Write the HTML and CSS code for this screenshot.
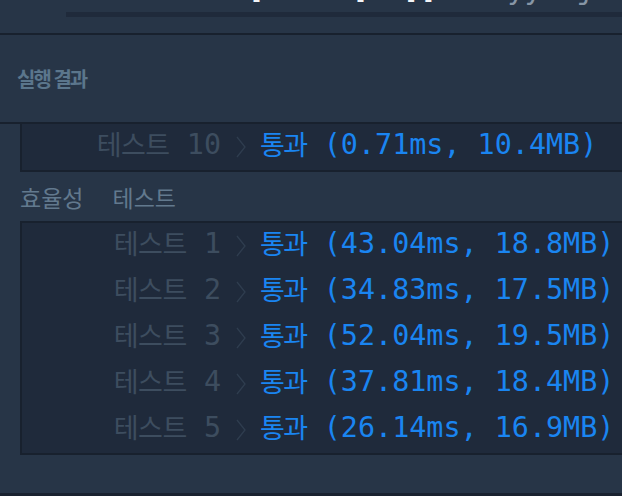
FILE: index.html
```html
<!DOCTYPE html>
<html lang="ko">
<head>
  <meta charset="UTF-8" />
  <meta name="viewport" content="width=device-width, initial-scale=1.0"/>
  <title>실행 결과</title>
  <link rel="stylesheet" href="styles.css">
</head>
<body>
  <div class="editor-tail">
    <div class="code-peek">
      <pre class="code-line"><span class="num">1</span> <span class="num">3</span><span class="br">[</span><span class="num">2</span><span class="num">4</span> <span class="num">5</span> <span class="br">[</span>  <span class="br">]]</span>    <span class="dim">yy</span>  <span class="dim">j</span></pre>
    </div>
    <div class="h-scroll"></div>
  </div>

  <section class="output">
    <h2 class="output-title">실행 결과</h2>

    <div class="results">
      <div class="case-box case-box-top">
        <div class="case-row">
          <span class="case-label"><span class="ko">테스트</span> 10</span>
          <svg class="chev" width="12" height="24" viewBox="0 0 12 24"><polyline points="2,2 10,12 2,22" fill="none" stroke="#2f3d4f" stroke-width="1.3"/></svg>
          <span class="case-status"><span class="ko">통과</span> (0.71ms, 10.4MB)</span>
        </div>
      </div>

      <div class="group-title">
        <span class="group-name">효율성</span>
        <span class="group-kind">테스트</span>
      </div>

      <div class="case-box">
        <div class="case-row">
          <span class="case-label"><span class="ko">테스트</span> 1</span>
          <svg class="chev" width="12" height="24" viewBox="0 0 12 24"><polyline points="2,2 10,12 2,22" fill="none" stroke="#2f3d4f" stroke-width="1.3"/></svg>
          <span class="case-status"><span class="ko">통과</span> (43.04ms, 18.8MB)</span>
        </div>
        <div class="case-row">
          <span class="case-label"><span class="ko">테스트</span> 2</span>
          <svg class="chev" width="12" height="24" viewBox="0 0 12 24"><polyline points="2,2 10,12 2,22" fill="none" stroke="#2f3d4f" stroke-width="1.3"/></svg>
          <span class="case-status"><span class="ko">통과</span> (34.83ms, 17.5MB)</span>
        </div>
        <div class="case-row">
          <span class="case-label"><span class="ko">테스트</span> 3</span>
          <svg class="chev" width="12" height="24" viewBox="0 0 12 24"><polyline points="2,2 10,12 2,22" fill="none" stroke="#2f3d4f" stroke-width="1.3"/></svg>
          <span class="case-status"><span class="ko">통과</span> (52.04ms, 19.5MB)</span>
        </div>
        <div class="case-row">
          <span class="case-label"><span class="ko">테스트</span> 4</span>
          <svg class="chev" width="12" height="24" viewBox="0 0 12 24"><polyline points="2,2 10,12 2,22" fill="none" stroke="#2f3d4f" stroke-width="1.3"/></svg>
          <span class="case-status"><span class="ko">통과</span> (37.81ms, 18.4MB)</span>
        </div>
        <div class="case-row">
          <span class="case-label"><span class="ko">테스트</span> 5</span>
          <svg class="chev" width="12" height="24" viewBox="0 0 12 24"><polyline points="2,2 10,12 2,22" fill="none" stroke="#2f3d4f" stroke-width="1.3"/></svg>
          <span class="case-status"><span class="ko">통과</span> (26.14ms, 16.9MB)</span>
        </div>
      </div>
    </div>
  </section>

  <div class="bottom-edge"></div>
</body>
</html>
```

FILE: styles.css
```css
body {
  margin: 0;
  width: 622px;
  height: 496px;
  overflow: hidden;
  background: #273547;
  font-family: "Noto Sans CJK KR", sans-serif;
}

/* tail of the code editor above the output panel */
.editor-tail {
  height: 33px;
  border-bottom: 2px solid #18212e;
}

.code-peek {
  height: 5px;
  overflow: hidden;
}

.code-line {
  margin: -23px 0 0 195px;
  font-family: "DejaVu Sans Mono", monospace;
  font-size: 28.8px;
  line-height: 24px;
  color: #e8edf2;
}

.code-line .num { color: #3f9a4f; }
.code-line .br { color: #f2f4f7; }
.code-line .dim { color: #8796a6; }

.h-scroll {
  height: 5px;
  margin: 7px 0 0 66px;
  background: #1f2a3b;
}

.output-title {
  height: 87px;
  margin: 0;
  padding-left: 17px;
  display: flex;
  align-items: center;
  font-size: 20px;
  font-weight: 700;
  letter-spacing: -2px;
  color: #5b768c;
}

.results {
  border-top: 2px solid #18212e;
}

.case-box {
  margin-left: 20px;
  background: #1f2a3b;
  border: 2px solid #18212e;
  border-right: none;
}

.case-box-top {
  border-top: none;
}

.case-row {
  display: grid;
  grid-template-columns: 199px 39px auto;
  align-items: center;
  box-sizing: border-box;
  height: 46px;
  padding-bottom: 6px;
  line-height: 34px;
  font-family: "DejaVu Sans Mono", "Noto Sans CJK KR", monospace;
  font-size: 28.4px;
  white-space: nowrap;
}

.case-row .ko {
  font-family: "Noto Sans CJK KR", sans-serif;
  font-size: 27px;
  vertical-align: -1px;
}

.case-label {
  text-align: right;
  color: #3d4d5f;
}

.case-label .ko {
  letter-spacing: -0.5px;
}

.chev {
  justify-self: center;
  margin-top: 5px;
}

.case-status {
  color: #1a85f1;
}

.case-status .ko {
  letter-spacing: -1.5px;
}

.group-title {
  height: 49px;
  display: flex;
  align-items: center;
  padding-left: 20px;
  gap: 29px;
  font-size: 23px;
  color: #62798e;
}

.bottom-edge {
  position: absolute;
  left: 0;
  right: 0;
  top: 493px;
  height: 3px;
  background: #1a2230;
}
```
